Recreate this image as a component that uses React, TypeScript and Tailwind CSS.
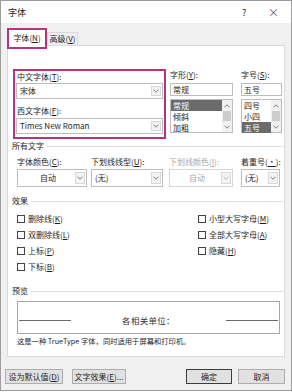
import React from 'react'

const font = { fontFamily: '"Noto Sans CJK SC", "Noto Sans", sans-serif' }

function Chevron({ up, color = '#5f5f5f' }: { up?: boolean; color?: string }) {
    return (
        <svg width="6" height="4" viewBox="0 0 6 4">
            <path
                d={up ? 'M0.5 3.3L3 0.8L5.5 3.3' : 'M0.5 0.7L3 3.2L5.5 0.7'}
                stroke={color}
                fill="none"
                strokeWidth="0.8"
            />
        </svg>
    )
}

// access key letter, underlined
function K({ k }: { k: string }) {
    return (
        <>
            (<span className="underline underline-offset-1">{k}</span>)
        </>
    )
}

function Combo({
    value,
    className,
    center,
    disabled,
}: {
    value: string
    className: string
    center?: boolean
    disabled?: boolean
}) {
    return (
        <div
            className={`flex items-center bg-white border ${disabled ? 'border-[#d6d6d6] text-[#a8a8a8]' : 'border-[#bdbdbd] text-[#1e1e1e]'} ${className}`}
        >
            <div className={`flex-1 pl-[3px] leading-none whitespace-nowrap ${center ? 'text-center' : ''}`}>{value}</div>
            <div className="flex items-center justify-center w-[10px] h-[calc(100%-4px)] mr-[1px] border border-[#d8d8d8] bg-[#f3f3f3]">
                <Chevron color={disabled ? '#b0b0b0' : '#5f5f5f'} />
            </div>
        </div>
    )
}

function ListBox({ items, selected }: { items: string[]; selected: number }) {
    return (
        <div className="mt-[3px] flex h-[34px] border border-[#bdbdbd] bg-white">
            <div className="flex-1 flex flex-col">
                {items.map((it, i) => (
                    <div
                        key={it}
                        className={`h-[11px] leading-[11px] pl-[2px] ${i === selected ? 'bg-[#6b6b6b] text-white' : 'text-[#1e1e1e]'}`}
                    >
                        {it}
                    </div>
                ))}
            </div>
            <div className="w-[10px] flex flex-col bg-[#f0f0f0]">
                <div className="h-[11px] flex items-center justify-center">
                    <Chevron up />
                </div>
                <div className="h-[10px] mx-[1px] bg-[#cdcdcd]" />
                <div className="flex-1 flex items-center justify-center">
                    <Chevron />
                </div>
            </div>
        </div>
    )
}

function Section({ title }: { title: string }) {
    return (
        <div className="flex items-center h-[10px] leading-none">
            <span>{title}</span>
            <div className="flex-1 h-px bg-[#dedede] ml-[3px]" />
        </div>
    )
}

function Check({ label, k }: { label: string; k: string }) {
    return (
        <div className="flex items-center h-[16px]">
            <div className="w-[8px] h-[8px] border border-[#444] bg-white" />
            <span className="ml-[3px] leading-none whitespace-nowrap">
                {label}
                <K k={k} />
            </span>
        </div>
    )
}

const btn = 'h-[15px] border bg-[#e1e1e1] flex items-center justify-center leading-none whitespace-nowrap'

export default function App() {
    return (
        <div className="w-[292px] h-[392px] bg-white text-[8px] text-[#1e1e1e]" style={font}>
            <div className="w-[292px] h-[391px] border border-[#9d9d9d] flex flex-col">
                {/* 标题栏 */}
                <div className="h-[22px] bg-white flex items-center pl-[7px]">
                    <span className="text-[9px] leading-none">字体</span>
                    <span className="ml-auto text-[9px] leading-none w-[8px]">?</span>
                    <span className="ml-[18px] mr-[12px] text-[11px] leading-none font-light">×</span>
                </div>

                <div className="flex-1 bg-[#f0f0f0] flex flex-col">
                    {/* 选项卡 */}
                    <div className="flex items-start h-[22px] pl-[6px] pt-[5px]">
                        <div className="relative z-10 h-[21px] w-[40px] border-2 border-[#b8327f] bg-white flex items-center justify-center leading-none pb-[2px] whitespace-nowrap">
                            字体<K k="N" />
                        </div>
                        <div className="mt-[4px] h-[13px] w-[31px] border border-b-0 border-[#d9d9d9] bg-[#f0f0f0] flex items-center justify-center leading-none whitespace-nowrap">
                            高级<K k="V" />
                        </div>
                    </div>

                    {/* 面板 */}
                    <div className="ml-[6px] w-[278px] h-[312px] border border-[#d9d9d9] bg-white pl-[4px] pr-[1px] pt-[23px]">
                        <div className="flex items-start ml-[1px]">
                            <div className="w-[153px] border-2 border-[#b8327f] px-[1px] pt-[1px] pb-[3px]">
                                <div className="h-[10px] leading-[10px] pl-[1px] whitespace-nowrap">
                                    中文字体<K k="T" />:
                                </div>
                                <Combo value="宋体" className="mt-[1px] h-[16px]" />
                                <div className="mt-[7px] h-[10px] leading-[10px] pl-[1px] whitespace-nowrap">
                                    西文字体<K k="F" />:
                                </div>
                                <Combo value="Times New Roman" className="mt-[2px] h-[16px]" />
                            </div>

                            <div className="ml-[4px] w-[63px] pt-[1px]">
                                <div className="h-[10px] leading-[10px] whitespace-nowrap">
                                    字形<K k="Y" />:
                                </div>
                                <div className="mt-[3px] h-[13px] border border-[#bdbdbd] pl-[2px] leading-[11px]">常规</div>
                                <ListBox items={['常规', '倾斜', '加粗']} selected={0} />
                            </div>

                            <div className="ml-[8px] w-[41px] pt-[1px]">
                                <div className="h-[10px] leading-[10px] whitespace-nowrap">
                                    字号<K k="S" />:
                                </div>
                                <div className="mt-[3px] h-[13px] border border-[#bdbdbd] pl-[2px] leading-[11px]">五号</div>
                                <ListBox items={['四号', '小四', '五号']} selected={2} />
                            </div>
                        </div>

                        {/* 所有文字 */}
                        <div className="mt-[2px]">
                            <Section title="所有文字" />
                        </div>
                        <div className="flex pl-[5px] mt-[6px]">
                            <div className="w-[70px]">
                                <div className="h-[10px] leading-[10px] whitespace-nowrap">
                                    字体颜色<K k="C" />:
                                </div>
                                <Combo value="自动" center className="mt-[2px] h-[18px]" />
                            </div>
                            <div className="ml-[4px] w-[72px]">
                                <div className="h-[10px] leading-[10px] whitespace-nowrap">
                                    下划线线型<K k="U" />:
                                </div>
                                <Combo value="(无)" className="mt-[2px] h-[18px]" />
                            </div>
                            <div className="ml-[6px] w-[64px]">
                                <div className="h-[10px] leading-[10px] text-[#a8a8a8] whitespace-nowrap">
                                    下划线颜色<K k="I" />:
                                </div>
                                <Combo value="自动" center disabled className="mt-[2px] h-[18px]" />
                            </div>
                            <div className="ml-[8px] w-[39px]">
                                <div className="h-[10px] leading-[10px] whitespace-nowrap">
                                    着重号(<span className="underline underline-offset-1">·</span>):
                                </div>
                                <Combo value="(无)" className="mt-[2px] h-[18px]" />
                            </div>
                        </div>

                        {/* 效果 */}
                        <div className="mt-[9px]">
                            <Section title="效果" />
                        </div>
                        <div className="mt-[5px] pl-[5px] grid grid-cols-[181px_1fr]">
                            <Check label="删除线" k="K" />
                            <Check label="小型大写字母" k="M" />
                            <Check label="双删除线" k="L" />
                            <Check label="全部大写字母" k="A" />
                            <Check label="上标" k="P" />
                            <Check label="隐藏" k="H" />
                            <Check label="下标" k="B" />
                        </div>

                        {/* 预览 */}
                        <div className="mt-[11px]">
                            <Section title="预览" />
                        </div>
                        <div className="mt-[5px] ml-[5px] w-[263px] h-[33px] border border-[#a6a6a6] flex items-center pt-[6px] px-[1px]">
                            <div className="w-[52px] h-px bg-[#6a6a6a]" />
                            <div className="flex-1 text-center text-[8.5px] tracking-[0.3px] text-[#333] leading-none">
                                各相关单位：
                            </div>
                            <div className="w-[52px] h-px bg-[#6a6a6a]" />
                        </div>
                        <div className="mt-[2px] pl-[5px] h-[10px] leading-[10px] text-[7.3px] whitespace-nowrap">
                            这是一种 TrueType 字体，同时适用于屏幕和打印机。
                        </div>
                    </div>

                    {/* 按钮 */}
                    <div className="flex mt-[12px] pl-[4px]">
                        <div className={`${btn} w-[58px] border-[#adadad]`}>
                            设为默认值<K k="D" />
                        </div>
                        <div className={`${btn} ml-[9px] w-[54px] border-[#adadad]`}>
                            文字效果<K k="E" />...
                        </div>
                        <div className={`${btn} ml-[60px] w-[46px] border-[#3c3c3c]`}>
                            确定
                        </div>
                        <div className={`${btn} ml-[6px] w-[47px] border-[#adadad]`}>
                            取消
                        </div>
                    </div>
                </div>
            </div>
        </div>
    )
}
